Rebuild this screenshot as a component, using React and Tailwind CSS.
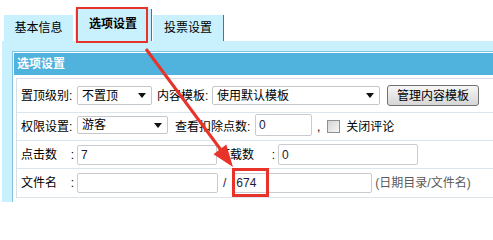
import React from 'react';

const FONT = "font-['Liberation_Sans','Noto_Sans_CJK_SC',sans-serif]";

function Select({ value, className }) {
  return (
    <div
      className={`flex items-center justify-between bg-white border border-[#c3c8cc] rounded-[2px] pl-[4px] pr-[5px] ${className}`}
    >
      <span className="leading-none">{value}</span>
      <svg width="8" height="5" viewBox="0 0 8 5">
        <path d="M0 0h8L4 5z" fill="#111" />
      </svg>
    </div>
  );
}

function Input({ value, className }) {
  return (
    <div
      className={`flex items-center bg-white border border-[#c8ccd0] rounded-[2px] pl-[3px] text-[#1b1b3a] ${className}`}
    >
      <span className="leading-none">{value}</span>
    </div>
  );
}

function Row({ height, children }) {
  return (
    <div className={`flex items-center border-b border-[#dce5eb] pl-[4px] ${height}`}>
      {children}
    </div>
  );
}

export default function App() {
  return (
    <div className={`relative w-[493px] h-[202px] bg-white overflow-hidden text-[12px] text-black ${FONT}`}>
      {/* Tabs */}
      <div className="flex items-end pl-[4px] pt-[9px] h-[41px]">
        <div className="w-[69px] h-[26px] bg-[#c9f1fd] flex items-center justify-center leading-none">
          基本信息
        </div>
        <div className="ml-[2px] w-[77px] h-[32px] bg-[#c9f1fd] border-r border-[#6b6b6b] flex items-center justify-center font-bold leading-none pb-[2px]">
          选项设置
        </div>
        <div className="ml-[1px] w-[71px] h-[26px] bg-[#c9f1fd] border-r border-[#6b6b6b] flex items-center justify-center leading-none">
          投票设置
        </div>
      </div>

      {/* Band + panel */}
      <div className="ml-[2px] h-[161px] bg-[#c9f1fd] pt-[10px] pl-[10px]">
        <div className="h-full border-l border-t border-[#7fc5e2] bg-white pl-[1px] pt-[1px]">
          <div className="h-[22px] bg-[#4fb3dd] text-white font-bold flex items-center pl-[3px] leading-none">
            选项设置
          </div>
          <div className="mt-[3px] ml-[2px] border-l border-t border-[#d8dfe4]">
            <Row height="h-[34px]">
              <span className="w-[56px] leading-none">置顶级别:</span>
              <Select value="不置顶" className="w-[75px] h-[19px]" />
              <span className="ml-[5px] w-[55px] leading-none">内容模板:</span>
              <Select value="使用默认模板" className="w-[168px] h-[19px]" />
              <button
                type="button"
                className="ml-[7px] w-[92px] h-[21px] border border-[#707070] rounded-[3px] bg-gradient-to-b from-[#f6f6f6] to-[#d6d6d6] leading-none text-black"
              >
                管理内容模板
              </button>
            </Row>
            <Row height="h-[28px]">
              <span className="w-[56px] leading-none">权限设置:</span>
              <Select value="游客" className="w-[91px] h-[18px] -mt-[3px]" />
              <span className="ml-[7px] w-[80px] leading-none">查看扣除点数:</span>
              <Input value="0" className="w-[57px] h-[22px] -mt-[3px]" />
              <span className="ml-[5px] leading-none">,</span>
              <span className="ml-[7px] w-[13px] h-[13px] border border-[#8e8f8f] bg-gradient-to-br from-[#d4d4d4] to-[#f7f7f7] -mt-[1px]" />
              <span className="ml-[6px] leading-none">关闭评论</span>
            </Row>
            <Row height="h-[28px]">
              <span className="w-[53px] flex justify-between leading-none">
                <span>点击数</span>
                <span>:</span>
              </span>
              <Input value="7" className="ml-[3px] w-[140px] h-[20px]" />
              <span className="ml-[1px] w-[57px] flex justify-between leading-none">
                <span>下载数</span>
                <span>:</span>
              </span>
              <Input value="0" className="ml-[3px] w-[140px] h-[21px]" />
            </Row>
            <Row height="h-[29px]">
              <span className="w-[53px] flex justify-between leading-none">
                <span>文件名</span>
                <span>:</span>
              </span>
              <Input value="" className="ml-[3px] w-[141px] h-[20px]" />
              <span className="ml-[5px] leading-none text-[#1b1b3a]">/</span>
              <Input value="674" className="ml-[6px] w-[140px] h-[20px]" />
              <span className="ml-[3px] leading-none text-[#5a5a5a]">(日期目录/文件名)</span>
            </Row>
          </div>
        </div>
      </div>

      {/* Annotations */}
      <div className="absolute left-[76px] top-[7px] w-[72px] h-[36px] border-2 border-[#e8332b]" />
      <div className="absolute left-[232px] top-[168px] w-[37px] h-[29px] border-[3px] border-[#e8332b]" />
      <svg
        className="absolute left-0 top-0 pointer-events-none"
        width="493"
        height="202"
        viewBox="0 0 493 202"
      >
        <line x1="146" y1="49" x2="221" y2="150" stroke="#e8332b" strokeWidth="3" />
        <polygon points="233,167 213.5,154.2 226.3,144.6" fill="#e8332b" />
      </svg>
    </div>
  );
}
